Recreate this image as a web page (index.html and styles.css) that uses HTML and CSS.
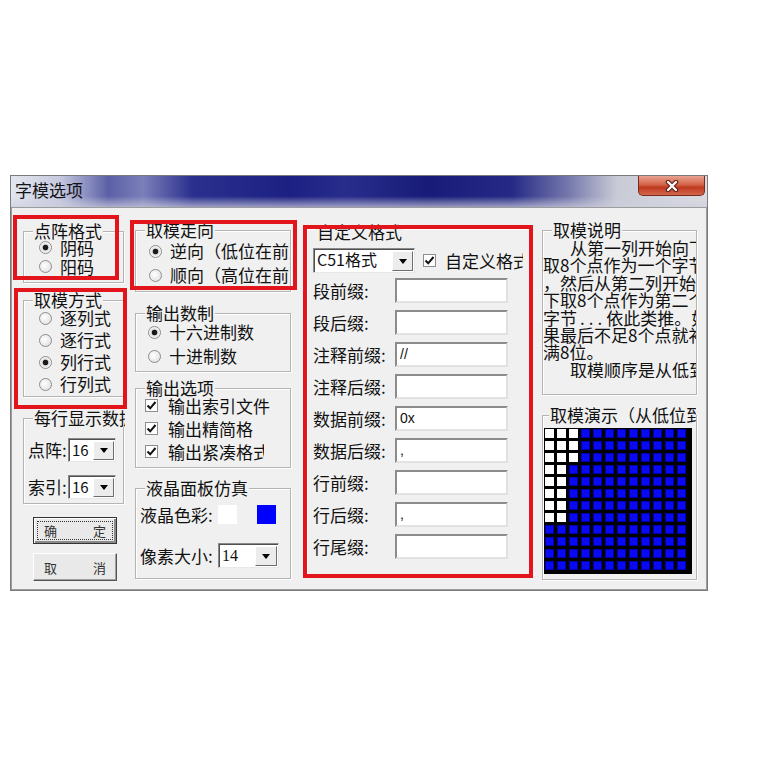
FILE: index.html
```html
<!DOCTYPE html>
<html lang="zh-CN">
  <head>
    <meta charset="UTF-8" />
    <title>字模选项</title>
    <link rel="stylesheet" href="styles.css">
  </head>
  <body>
    <div class="dialog">
      <div class="titlebar">
        <span class="title">字模选项</span>
        <span class="close">
          <svg width="14" height="12" viewBox="0 0 14 12">
            <path d="M3 2 L11 10 M11 2 L3 10" stroke="#5a1c12" stroke-width="4.5" stroke-linecap="round" />
            <path d="M3 2 L11 10 M11 2 L3 10" stroke="#fff" stroke-width="2.4" stroke-linecap="round" />
          </svg>
        </span>
      </div>
      <div class="client">
        <!-- left column -->
        <div class="col col1">
          <div class="group g-dot">
            <span class="cap">点阵格式</span>
            <div class="opts">
              <div class="opt"><span class="radio on"></span>阴码</div>
              <div class="opt"><span class="radio"></span>阳码</div>
            </div>
          </div>
          <div class="group g-mode">
            <span class="cap">取模方式</span>
            <div class="opts">
              <div class="opt"><span class="radio"></span>逐列式</div>
              <div class="opt"><span class="radio"></span>逐行式</div>
              <div class="opt"><span class="radio on"></span>列行式</div>
              <div class="opt"><span class="radio"></span>行列式</div>
            </div>
          </div>
          <div class="group g-line">
            <span class="cap">每行显示数据</span>
            <div class="pick">
              <span class="lbl">点阵:</span>
              <div class="combo"><span class="val">16</span><span class="drop"><b></b></span></div>
            </div>
            <div class="pick">
              <span class="lbl">索引:</span>
              <div class="combo"><span class="val">16</span><span class="drop"><b></b></span></div>
            </div>
          </div>
          <div class="btn ok"><span>确</span><span>定</span></div>
          <div class="btn cancel"><span>取</span><span>消</span></div>
        </div>

        <!-- second column -->
        <div class="col col2">
          <div class="group g-dir">
            <span class="cap">取模走向</span>
            <div class="opts">
              <div class="opt"><span class="radio on"></span>逆向（低位在前）</div>
              <div class="opt"><span class="radio"></span>顺向（高位在前）</div>
            </div>
          </div>
          <div class="group g-radix">
            <span class="cap">输出数制</span>
            <div class="opts">
              <div class="opt"><span class="radio on"></span>十六进制数</div>
              <div class="opt"><span class="radio"></span>十进制数</div>
            </div>
          </div>
          <div class="group g-out">
            <span class="cap">输出选项</span>
            <div class="opts">
              <div class="opt"><span class="check"><svg width="11" height="11" viewBox="0 0 11 11"><path d="M1.5 5.5 L4.2 8.3 L9.5 2" fill="none" stroke="#111" stroke-width="2" /></svg></span>输出索引文件</div>
              <div class="opt"><span class="check"><svg width="11" height="11" viewBox="0 0 11 11"><path d="M1.5 5.5 L4.2 8.3 L9.5 2" fill="none" stroke="#111" stroke-width="2" /></svg></span>输出精简格</div>
              <div class="opt cut-opt"><span class="check"><svg width="11" height="11" viewBox="0 0 11 11"><path d="M1.5 5.5 L4.2 8.3 L9.5 2" fill="none" stroke="#111" stroke-width="2" /></svg></span>输出紧凑格式</div>
            </div>
          </div>
          <div class="group g-lcd">
            <span class="cap">液晶面板仿真</span>
            <div class="pick colors">
              <span class="lbl">液晶色彩:</span>
              <span class="swatch white"></span>
              <span class="swatch blue"></span>
            </div>
            <div class="pick size">
              <span class="lbl">像素大小:</span>
              <div class="combo px"><span class="val">14</span><span class="drop"><b></b></span></div>
            </div>
          </div>
        </div>

        <!-- custom format -->
        <div class="col col3">
          <div class="group g-custom">
            <span class="cap">自定义格式</span>
            <div class="toprow">
              <div class="combo fmt"><span class="val">C51格式</span><span class="drop"><b></b></span></div>
              <span class="check"><svg width="11" height="11" viewBox="0 0 11 11"><path d="M1.5 5.5 L4.2 8.3 L9.5 2" fill="none" stroke="#111" stroke-width="2" /></svg></span>
              <span class="cut">自定义格式</span>
            </div>
            <div class="field"><span class="lbl">段前缀:</span><span class="edit"></span></div>
            <div class="field"><span class="lbl">段后缀:</span><span class="edit"></span></div>
            <div class="field"><span class="lbl">注释前缀:</span><span class="edit">//</span></div>
            <div class="field"><span class="lbl">注释后缀:</span><span class="edit"></span></div>
            <div class="field"><span class="lbl">数据前缀:</span><span class="edit">0x</span></div>
            <div class="field"><span class="lbl">数据后缀:</span><span class="edit">,</span></div>
            <div class="field"><span class="lbl">行前缀:</span><span class="edit"></span></div>
            <div class="field"><span class="lbl">行后缀:</span><span class="edit">,</span></div>
            <div class="field"><span class="lbl">行尾缀:</span><span class="edit"></span></div>
          </div>
        </div>

        <!-- right column -->
        <div class="col col4">
          <div class="group g-desc">
            <span class="cap">取模说明</span>
            <div class="desc">
              <div class="ind">从第一列开始向下</div>
              <div>取8个点作为一个字节</div>
              <div>，然后从第二列开始向</div>
              <div>下取8个点作为第二个</div>
              <div>字节<span class="dots">...</span>依此类推。如</div>
              <div>果最后不足8个点就补</div>
              <div>满8位。</div>
              <div class="ind">取模顺序是从低到高</div>
            </div>
          </div>
          <div class="group g-demo">
            <span class="cap">取模演示（从低位到高位）</span>
            <div class="matrix">
              <i class="w"></i><i class="w"></i><i class="w"></i><i></i><i></i><i></i><i></i><i></i><i></i><i></i><i></i><i></i>
              <i class="w"></i><i class="w"></i><i class="w"></i><i></i><i></i><i></i><i></i><i></i><i></i><i></i><i></i><i></i>
              <i class="w"></i><i class="w"></i><i class="w"></i><i></i><i></i><i></i><i></i><i></i><i></i><i></i><i></i><i></i>
              <i class="w"></i><i class="w"></i><i></i><i></i><i></i><i></i><i></i><i></i><i></i><i></i><i></i><i></i>
              <i class="w"></i><i class="w"></i><i></i><i></i><i></i><i></i><i></i><i></i><i></i><i></i><i></i><i></i>
              <i class="w"></i><i class="w"></i><i></i><i></i><i></i><i></i><i></i><i></i><i></i><i></i><i></i><i></i>
              <i class="w"></i><i class="w"></i><i></i><i></i><i></i><i></i><i></i><i></i><i></i><i></i><i></i><i></i>
              <i class="w"></i><i class="w"></i><i></i><i></i><i></i><i></i><i></i><i></i><i></i><i></i><i></i><i></i>
              <i></i><i></i><i></i><i></i><i></i><i></i><i></i><i></i><i></i><i></i><i></i><i></i>
              <i></i><i></i><i></i><i></i><i></i><i></i><i></i><i></i><i></i><i></i><i></i><i></i>
              <i></i><i></i><i></i><i></i><i></i><i></i><i></i><i></i><i></i><i></i><i></i><i></i>
              <i></i><i></i><i></i><i></i><i></i><i></i><i></i><i></i><i></i><i></i><i></i><i></i>
            </div>
          </div>
        </div>
      </div>

      <!-- red highlight marks drawn over the dialog -->
      <span class="mark m1"></span>
      <span class="mark m2"></span>
      <span class="mark m3"></span>
      <span class="mark m4"></span>
    </div>
  </body>
</html>
```

FILE: styles.css
```css
* {
  margin: 0;
  padding: 0;
  box-sizing: border-box;
}
body {
  background: #fff;
  font-family: "Noto Sans CJK SC", "Liberation Sans", sans-serif;
  font-size: 17px;
  color: #111;
}
.dialog {
  position: relative;
  width: 698px;
  height: 416px;
  margin: 175px 0 0 10px;
  border: 1px solid #7b7b7b;
  background: #d9dae0;
  display: flex;
  flex-direction: column;
}
.titlebar {
  height: 31px;
  flex: none;
  display: flex;
  justify-content: space-between;
  align-items: flex-start;
  background:
    linear-gradient(to bottom, rgba(255, 255, 255, 0) 65%, rgba(205, 207, 220, 0.7)),
    linear-gradient(to right, #e4e6ef 0, #c7cae0 7%, #5b60a6 14%, #7b7fba 19%, #2b308e 26%, #1c2082 40%, #282c8b 48%, #181c78 60%, #262a86 72%, #7477ab 80%, #c8cad6 87%, #dcdde3 100%);
}
.title {
  margin: 2px 0 0 4px;
  line-height: 24px;
  color: #141414;
}
.close {
  width: 67px;
  height: 20px;
  margin-right: 2px;
  display: flex;
  align-items: center;
  justify-content: center;
  border: 1px solid #7a2a1c;
  border-top: none;
  border-radius: 0 0 5px 5px;
  background: linear-gradient(#e9a392, #d4634a 45%, #bf3a20 60%, #d2664c);
}
.client {
  flex: 1;
  display: flex;
  align-items: flex-start;
  border: 1px solid #9c9c9c;
  background: #f0f0f0;
}
.col {
  display: flex;
  flex-direction: column;
}
.col1 {
  width: 101px;
  margin-left: 11px;
}
.col2 {
  width: 156px;
  margin-left: 11px;
}
.col3 {
  width: 224px;
  margin-left: 15px;
}
.col4 {
  width: 155px;
  margin-left: 12px;
}

/* group boxes */
.group {
  border: 1px solid #b4b4b4;
  box-shadow: inset 1px 1px 0 #fff, 1px 1px 0 #fff;
}
.cap {
  display: block;
  width: max-content;
  height: 18px;
  line-height: 18px;
  margin: -10px 0 0 9px;
  padding: 0 1px;
  background: #f0f0f0;
  white-space: nowrap;
  overflow: hidden;
}
.opt {
  display: flex;
  align-items: center;
  line-height: 20px;
  white-space: nowrap;
  overflow: hidden;
}
.radio {
  flex: none;
  width: 13px;
  height: 13px;
  margin-right: 8px;
  border: 1px solid #8d8d8d;
  border-radius: 50%;
  background: radial-gradient(circle at 40% 40%, #fff, #dadada);
}
.radio.on {
  background: radial-gradient(circle, #1a1a1a 0 2.4px, #dcdcdc 3.2px, #fff 6px);
}
.check {
  flex: none;
  width: 13px;
  height: 13px;
  margin-right: 10px;
  border: 1px solid #8d8d8d;
  background: #fff;
  display: flex;
}

.g-dot {
  margin-top: 23px;
  height: 52px;
}
.g-dot .opts,
.g-mode .opts {
  margin-top: -2px;
}
.g-dot .opt,
.g-mode .opt {
  height: 19px;
  padding-left: 15px;
}
.g-mode {
  margin-top: 17px;
  height: 97px;
}
.g-mode .opt {
  height: 22px;
}
.g-line {
  margin-top: 21px;
  height: 86px;
}
.g-line .cap {
  max-width: 92px;
}
.pick {
  display: flex;
  align-items: center;
  padding-left: 4px;
}
.g-line .pick {
  margin-top: 12px;
}
.g-line .cap + .pick {
  margin-top: 10px;
}
.g-line .lbl {
  width: 40px;
}

/* combo boxes */
.combo {
  display: flex;
  width: 48px;
  height: 24px;
  background: #fff;
  border: 1px solid;
  border-color: #8a8a8a #e8e8e8 #e8e8e8 #8a8a8a;
  box-shadow: inset 1px 1px 0 #505050;
}
.combo .val {
  flex: 1;
  padding-left: 3px;
  font-size: 15px;
  line-height: 21px;
  white-space: nowrap;
}
.drop {
  flex: none;
  width: 21px;
  margin: 2px 1px 1px 0;
  display: flex;
  align-items: center;
  justify-content: center;
  background: #ececec;
  border: 1px solid;
  border-color: #fff #6d6d6d #6d6d6d #fff;
}
.drop b {
  border-left: 4px solid transparent;
  border-right: 4px solid transparent;
  border-top: 5px solid #000;
}

/* buttons */
.btn {
  display: flex;
  justify-content: center;
  align-items: center;
  gap: 36px;
  width: 84px;
  height: 27px;
  margin-left: 10px;
  font-size: 13px;
  color: #333;
  background: #e9e9e9;
  border: 1px solid;
  border-color: #fff #555 #555 #fff;
  box-shadow: inset -1px -1px 0 #a0a0a0;
}
.btn.ok {
  margin-top: 13px;
  border-color: #333;
  box-shadow: inset 1px 1px 0 #fff, inset -2px -2px 0 #8a8a8a;
  outline: 1px dotted #333;
  outline-offset: -5px;
}
.btn.cancel {
  margin-top: 9px;
  height: 28px;
}

/* second column */
.g-dir {
  margin-top: 22px;
  height: 62px;
}
.g-dir .opt {
  height: 24px;
  padding-left: 13px;
}
.g-radix {
  margin-top: 21px;
  height: 59px;
}
.g-radix .opts {
  margin-top: -2px;
}
.g-radix .opt {
  height: 24px;
  padding-left: 12px;
}
.g-out {
  margin-top: 16px;
  height: 80px;
}
.g-out .opts {
  margin-top: -3px;
}
.g-out .opt {
  height: 23px;
  padding-left: 9px;
}
.g-out .cut-opt {
  width: 128px;
}
.g-lcd {
  margin-top: 20px;
  height: 91px;
}
.g-lcd .lbl {
  width: 78px;
}
.colors {
  margin-top: 8px;
  height: 19px;
}
.swatch {
  width: 19px;
  height: 19px;
}
.swatch.white {
  background: #fff;
  margin-right: 20px;
}
.swatch.blue {
  background: #0000fe;
}
.size {
  margin-top: 19px;
}
.combo.px {
  width: 61px;
  height: 25px;
}
.combo.px .val {
  font-family: "Liberation Serif", serif;
  font-size: 16px;
  padding-top: 1px;
}
.combo.px .drop {
  width: 22px;
}

/* custom format */
.g-custom {
  margin-top: 20px;
  height: 348px;
}
.g-custom .cap {
  margin-top: -6px;
}
.toprow {
  display: flex;
  align-items: center;
  height: 25px;
  margin-top: 7px;
  padding-left: 6px;
}
.combo.fmt {
  width: 102px;
  height: 25px;
}
.combo.fmt .val {
  font-size: 16px;
}
.toprow .check {
  margin: 0 9px 0 8px;
}
.cut {
  width: 78px;
  overflow: hidden;
  white-space: nowrap;
}
.field {
  display: flex;
  align-items: center;
  height: 25px;
  margin-top: 7px;
  padding-left: 6px;
}
.toprow + .field {
  margin-top: 5px;
}
.field .lbl {
  width: 82px;
  white-space: nowrap;
}
.edit {
  width: 113px;
  height: 25px;
  padding-left: 3px;
  background: #fff;
  border: 2px solid;
  border-color: #8c8c8c #e2e2e2 #e2e2e2 #8c8c8c;
  font-family: "Liberation Sans", sans-serif;
  font-size: 14px;
  line-height: 21px;
}

/* right column */
.g-desc {
  margin-top: 22px;
  height: 165px;
}
.desc {
  overflow: hidden;
  white-space: nowrap;
  line-height: 17.4px;
}
.desc .ind {
  padding-left: 27px;
}
.dots {
  letter-spacing: 4px;
  margin-left: 3px;
}
.g-demo {
  margin-top: 20px;
  height: 165px;
}
.g-demo .cap {
  margin-left: 6px;
  max-width: 147px;
}
.matrix {
  width: 148px;
  height: 146px;
  margin: 4px 0 0 1px;
  padding: 1px 0 0 1px;
  background: #000;
  display: grid;
  grid-template-columns: repeat(12, 9px);
  grid-auto-rows: 9px;
  gap: 3px;
  align-content: start;
}
.matrix i {
  background: #0a0af2;
  box-shadow: inset 0 0 0 1px #0000b0;
}
.matrix i.w {
  background: #fff;
  box-shadow: none;
}

/* red annotation frames */
.mark {
  position: absolute;
  border: 4px solid #e2151d;
}
.m1 {
  left: 2px;
  top: 39px;
  width: 106px;
  height: 65px;
}
.m2 {
  left: 3px;
  top: 112px;
  width: 113px;
  height: 121px;
}
.m3 {
  left: 119px;
  top: 44px;
  width: 167px;
  height: 70px;
}
.m4 {
  left: 292px;
  top: 49px;
  width: 230px;
  height: 353px;
}
```
